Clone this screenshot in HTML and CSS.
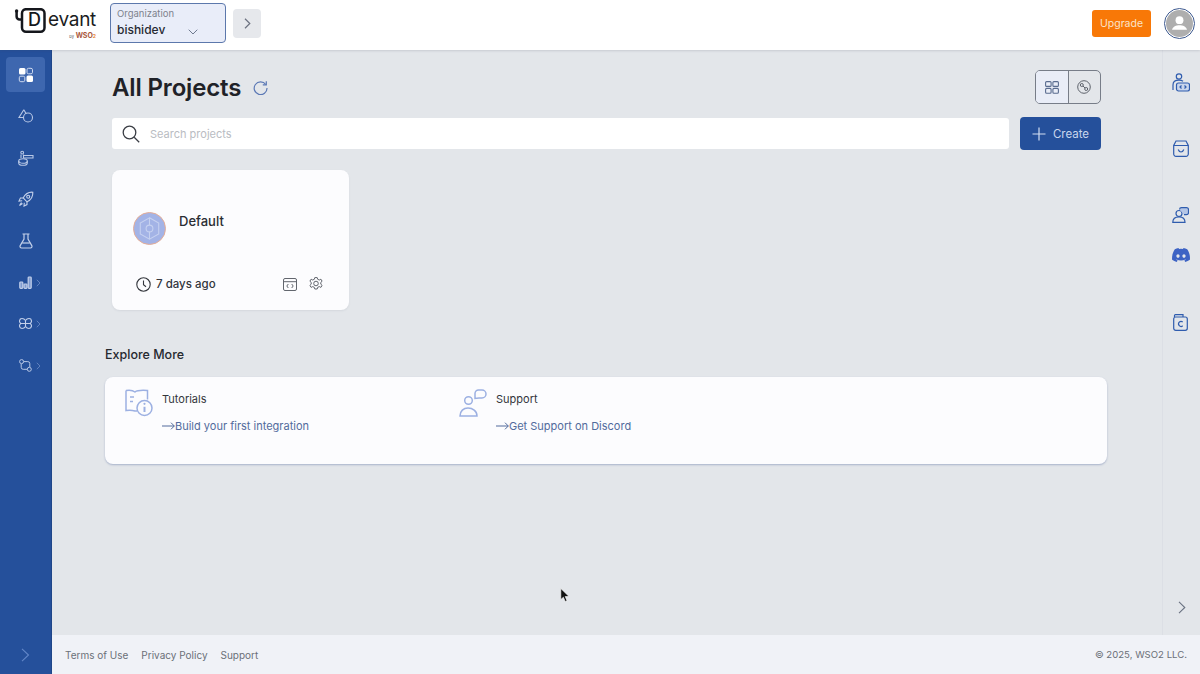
FILE: index.html
```html
<!DOCTYPE html>
<html lang="en">
<head>
<meta charset="utf-8">
<title>Devant - All Projects</title>
<link rel="stylesheet" href="styles.css">
</head>
<body>
<header class="topbar">
  <div class="logo">
    <svg class="logo-mark" width="34" height="26" viewBox="0 0 34 26" fill="none" stroke="#15171c" stroke-width="2.500"><circle cx="2.600" cy="3" r="1.700" fill="#15171c" stroke="none"/><path d="M2.600 3v5.500a3 3 0 0 0 3 3h2.400"/><rect x="8" y="1.200" width="22.500" height="22.500" rx="4"/></svg>
    <span class="logo-d">D</span>
    <div class="logo-text"><span class="logo-word">evant</span><span class="logo-by"><small>by</small> <b>WSO<i>2</i></b></span></div>
  </div>
  <div class="org">
    <span class="org-label">Organization</span>
    <span class="org-value">bishidev <svg width="10" height="6" viewBox="0 0 10 6" fill="none" stroke="#6f7a90" stroke-width="1"><path d="M.7.7 5 5l4.300-4.300"/></svg></span>
  </div>
  <button class="org-next"><svg width="7" height="11" viewBox="0 0 7 11" fill="none" stroke="#6c7280" stroke-width="1.200"><path d="M1 .8 5.800 5.500 1 10.200"/></svg></button>
  <div class="spacer"></div>
  <button class="upgrade">Upgrade</button>
  <div class="avatar"><svg width="27" height="27" viewBox="0 0 26 26"><circle cx="13" cy="13" r="13" fill="#aeaeae"/><circle cx="13" cy="9.800" r="3.800" fill="#fff"/><path d="M5.800 19c.6-3.200 4-4.400 7.200-4.400s6.600 1.200 7.200 4.400z" fill="#fff"/></svg></div>
</header>

<div class="body-row">
  <nav class="sidebar">
    <a class="nav-item active"><svg width="16" height="16" viewBox="0 0 16 16"><rect x="1" y="1" width="6.500" height="6.500" rx="1.500" fill="#fff"/><rect x="9" y="1.300" width="5.500" height="5.500" rx="1.500" fill="none" stroke="#cfdaf0"/><rect x="1.300" y="9.200" width="5.500" height="5.500" rx="1.500" fill="none" stroke="#cfdaf0"/><rect x="8.500" y="8.500" width="6.500" height="6.500" rx="1.500" fill="#fff"/></svg></a>
    <a class="nav-item"><svg width="16" height="16" viewBox="0 0 16 16" fill="none" stroke="#b9c8e6" stroke-width="1.100"><path d="M5.800 1.800 1 9.500h4"/><path d="M5.800 1.800 8.200 5.800"/><circle cx="10" cy="9.500" r="4.500"/></svg></a>
    <a class="nav-item"><svg width="16" height="16" viewBox="0 0 16 16" fill="none" stroke="#b9c8e6" stroke-width="1.100"><circle cx="4.200" cy="2.600" r="1.400"/><path d="M3 4.500v3.500M5.500 4.500v3.500M5.500 5.500h9.500v2.500H5.500"/><ellipse cx="5" cy="11" rx="4.300" ry="2.300"/><path d="M.7 11v2c0 1.300 2 2.300 4.300 2.300s4.300-1 4.300-2.300v-2"/></svg></a>
    <a class="nav-item"><svg width="16" height="16" viewBox="0 0 16 16" fill="none" stroke="#c3d0ea" stroke-width="1.100"><path d="M14.800 1.200c-4.500-.3-7.600 1.700-9.600 5.800l3.800 3.800c4.100-2 6.100-5.100 5.800-9.600z"/><circle cx="10.200" cy="5.800" r="1.500"/><path d="M5.200 7H2.400L1 10l3.200-.3M9 10.800v2.800L6 15l.3-3.200M3.500 11.500 1.500 14.500l3-2"/></svg></a>
    <a class="nav-item"><svg width="14" height="16" viewBox="0 0 14 16" fill="none" stroke="#c3d0ea" stroke-width="1.200"><path d="M3.500 1h7M5 1v5L1.200 12.600A1.600 1.600 0 0 0 2.600 15h8.800a1.600 1.600 0 0 0 1.400-2.400L9 6V1"/><path d="M3.200 10h7.600"/></svg></a>
    <a class="nav-item has-arrow"><svg width="13" height="13" viewBox="0 0 13 13" fill="#7f9bd0" stroke="#c3d0ea" stroke-width="1.200"><rect x=".8" y="6" width="3" height="6.300" rx=".8"/><rect x="5" y="8" width="3" height="4.300" rx=".8"/><rect x="9.200" y="1" width="3" height="11.300" rx=".8"/></svg><svg class="nav-arrow" width="5" height="8" viewBox="0 0 5 8" fill="none" stroke="#5f80bd"><path d="M.8.8 4 4 .8 7.200"/></svg></a>
    <a class="nav-item has-arrow"><svg width="13" height="13" viewBox="0 0 13 13" fill="none" stroke="#c3d0ea" stroke-width="1.100"><path d="M3 1.500c1.500 0 2.600.7 3.500 2 .9-1.300 2-2 3.500-2 1.600 0 2.500 1.200 2.500 2.700 0 1-.5 1.800-1.500 2.300 1 .5 1.500 1.300 1.500 2.300 0 1.500-.9 2.700-2.500 2.700-1.500 0-2.600-.7-3.500-2-.9 1.300-2 2-3.500 2C1.400 11.500.5 10.300.5 8.800c0-1 .5-1.800 1.500-2.300-1-.5-1.500-1.300-1.500-2.300 0-1.500.9-2.700 2.500-2.700z"/><path d="M2 6.500h9M6.500 3.500v6"/></svg><svg class="nav-arrow" width="5" height="8" viewBox="0 0 5 8" fill="none" stroke="#5f80bd"><path d="M.8.8 4 4 .8 7.200"/></svg></a>
    <a class="nav-item has-arrow"><svg width="13" height="13" viewBox="0 0 13 13" fill="none" stroke="#b9c8e6" stroke-width="1"><circle cx="2.600" cy="2.600" r="2"/><circle cx="10.300" cy="10.300" r="2"/><path d="M4.800 2.600h4a2 2 0 0 1 2 2v3.400M8.200 10.300h-4a2 2 0 0 1-2-2V5"/></svg><svg class="nav-arrow" width="5" height="8" viewBox="0 0 5 8" fill="none" stroke="#5f80bd"><path d="M.8.8 4 4 .8 7.200"/></svg></a>
    <div class="spacer"></div>
    <a class="nav-expand"><svg width="9" height="14" viewBox="0 0 9 14" fill="none" stroke="#6286c8" stroke-width="1.100"><path d="M1 .8 7.500 7 1 13.200"/></svg></a>
  </nav>

  <div class="page-col">
    <div class="page-row">
      <main class="content">
        <div class="title-row">
          <h1>All Projects</h1>
          <svg class="refresh" width="15" height="15" viewBox="0 0 15 15" fill="none" stroke="#5b78b5" stroke-width="1.200"><path d="M12.800 4.500A6.400 6.400 0 1 0 14 8"/><path d="M13.300 1.300v3.500H9.800"/></svg>
          <div class="spacer"></div>
          <div class="view-toggle">
            <button class="view-btn selected"><svg width="14" height="13" viewBox="0 0 14 13" fill="none" stroke="#5a6c8f" stroke-width="1.100"><rect x=".6" y=".6" width="5.500" height="4.800" rx="1"/><rect x="7.900" y=".6" width="5.500" height="4.800" rx="1"/><rect x=".6" y="7.400" width="5.500" height="4.800" rx="1"/><rect x="7.900" y="7.400" width="5.500" height="4.800" rx="1"/></svg></button>
            <button class="view-btn"><svg width="14" height="14" viewBox="0 0 14 14" fill="none" stroke="#5e636c" stroke-width="1"><circle cx="7" cy="7" r="6.300"/><circle cx="4.800" cy="5" r="1.500"/><circle cx="9.200" cy="9" r="1.500"/><path d="M6 6 8 8"/></svg></button>
          </div>
        </div>
        <div class="search-row">
          <div class="search">
            <svg width="18" height="18" viewBox="0 0 18 18" fill="none" stroke="#3a3d44" stroke-width="1.300"><circle cx="7.500" cy="7.500" r="6.300"/><path d="m12.200 12.200 5 5"/></svg>
            <span>Search projects</span>
          </div>
          <button class="create"><svg width="14" height="14" viewBox="0 0 14 14" stroke="#d3def2" stroke-width="1.200"><path d="M7 .5v13M.5 7h13"/></svg>Create</button>
        </div>
        <article class="card">
          <div class="card-top">
            <div class="project-icon"><svg width="33" height="33" viewBox="0 0 34 34"><circle cx="17" cy="17" r="16.500" fill="#a3b3e6" stroke="#e5ab94" stroke-width="1"/><g fill="none" stroke="#c6d1f0" stroke-width="1.100"><path d="m17 6 9.500 5.500v11L17 28l-9.500-5.500v-11z"/><circle cx="17" cy="17" r="3.500"/><path d="M17 13.500V6M17 20.500V28"/></g></svg></div>
            <span class="card-name">Default</span>
          </div>
          <div class="card-bottom">
            <svg width="15" height="15" viewBox="0 0 15 15" fill="none" stroke="#33363c" stroke-width="1.100"><circle cx="7.500" cy="7.500" r="6.700"/><path d="M7.500 3.500v4.300l2.500 2"/></svg>
            <span class="card-age">7 days ago</span>
            <div class="spacer"></div>
            <svg class="card-action" width="14" height="13" viewBox="0 0 14 13" fill="none" stroke="#62666e"><rect x=".5" y=".5" width="13" height="12" rx="1.500"/><path d="M.5 3.700h13M5.300 6 3.800 8l1.500 2M8.700 6l1.500 2-1.500 2"/></svg>
            <svg class="card-action gear" width="14" height="14" viewBox="0 0 14 14" fill="none" stroke="#62666e"><path d="m5.800.6 2.400 0 .5 1.700 1.600.7 1.600-.8 1.200 2-1.300 1.200v1.800l1.300 1.200-1.200 2-1.600-.8-1.600.7-.5 1.700H5.800l-.5-1.700-1.600-.7-1.600.8-1.200-2L2.200 7.200V5.400L.9 4.200l1.200-2 1.600.8 1.600-.7z"/><circle cx="7" cy="6.500" r="2.300"/></svg>
          </div>
        </article>
        <h2>Explore More</h2>
        <section class="explore">
          <div class="explore-item">
            <svg width="28" height="28" viewBox="0 0 28 28" fill="none" stroke="#9cb0e2" stroke-width="1.500"><path d="M1 1.500c3-.5 6.500-.5 9 1.500 2.500-2 6-2 12.500-1.500v9M1 1.500v20c3-.5 6-.5 9 .5h2"/><path d="M5 8h4M5 12.500h3"/><circle cx="19.500" cy="19" r="7.500"/><path d="M19.500 17.800v5.200" stroke-width="2"/><circle cx="19.500" cy="14.800" r="1.100" fill="#9cb0e2" stroke="none"/></svg>
            <div class="explore-text"><span class="explore-title">Tutorials</span><a class="explore-link"><svg width="13" height="8" viewBox="0 0 13 8" fill="none" stroke="#526b9c"><path d="M0 4h12.300M9 .7 12.300 4 9 7.300"/></svg>Build your first integration</a></div>
          </div>
          <div class="explore-item second">
            <svg width="28" height="28" viewBox="0 0 28 28" fill="none" stroke="#9cb0e2" stroke-width="1.500"><circle cx="9.500" cy="11.500" r="3.800"/><path d="M1 27c0-5 3.500-8 8-8s9 3 9 8z"/><path d="M16 9.500V4.500A3.500 3.500 0 0 1 19.500 1h3.500a3.500 3.500 0 0 1 0 8h-3z"/></svg>
            <div class="explore-text"><span class="explore-title">Support</span><a class="explore-link"><svg width="13" height="8" viewBox="0 0 13 8" fill="none" stroke="#526b9c"><path d="M0 4h12.300M9 .7 12.300 4 9 7.300"/></svg>Get Support on Discord</a></div>
          </div>
        </section>
      </main>

      <aside class="rail">
        <a class="rail-item"><svg width="18" height="19" viewBox="0 0 18 19" fill="none" stroke="#2f5cae" stroke-width="1.200"><circle cx="7" cy="3.500" r="2.700"/><path d="M1 17v-5c0-3 2.500-4.800 6-4.800 1.500 0 3 .3 4 1"/><rect x="4.500" y="10" width="13" height="8" rx="2" fill="#c9d5ec"/><path d="m9.500 12.500-1.500 1.500 1.500 1.500M12.500 12.500l1.500 1.500-1.500 1.500"/></svg></a>
        <a class="rail-item r2"><svg width="16" height="17" viewBox="0 0 16 17" fill="none" stroke="#2f5cae" stroke-width="1.200"><path d="M3 1h10l2.300 4.500V14a2.300 2.300 0 0 1-2.300 2.300H3A2.300 2.300 0 0 1 .7 14V5.500z"/><path d="M.7 5.500h14.600M5.200 9.500c.6 1.700 1.500 2.500 2.800 2.500s2.200-.8 2.800-2.500"/></svg></a>
        <a class="rail-item r3"><svg width="17" height="16" viewBox="0 0 17 16" fill="none" stroke="#2f5cae" stroke-width="1.200"><circle cx="7" cy="6.500" r="3"/><path d="M.8 15.300c0-3.500 2.700-5.500 6.200-5.500s6 2 6 5.500z"/><path d="M7.500 2.500A2 2 0 0 1 9.500.7h5a2 2 0 0 1 2 2v3a2 2 0 0 1-2 2h-2.500" fill="#b5c6e6"/></svg></a>
        <a class="rail-item r4"><svg width="18" height="14" viewBox="0 0 18 14"><path d="M15.200 1.200A14.600 14.600 0 0 0 11.500 0l-.5 1a13.500 13.500 0 0 0-4 0l-.5-1a14.600 14.600 0 0 0-3.700 1.200C.5 4.800-.2 8.300.1 11.800A14.800 14.800 0 0 0 4.700 14l1-1.500-1.600-.8.400-.3a10.500 10.500 0 0 0 9 0l.4.300-1.600.8 1 1.500a14.800 14.800 0 0 0 4.600-2.200c.4-4-.6-7.500-2.700-10.600zM6 9.800c-.9 0-1.600-.8-1.600-1.800S5.100 6.200 6 6.200 7.600 7 7.600 8 6.900 9.800 6 9.800zm6 0c-.9 0-1.600-.8-1.600-1.800s.7-1.800 1.600-1.800 1.600.8 1.600 1.800-.7 1.800-1.600 1.800z" fill="#3d63c4"/></svg></a>
        <a class="rail-item r5"><svg width="15" height="17" viewBox="0 0 15 17" fill="none" stroke="#2f5cae" stroke-width="1.200"><path d="M1.500 3V1.600c0-.5.400-.9.900-.9H10v2.300"/><rect x=".7" y="3" width="13.600" height="13.300" rx="2"/><path d="M9.700 8a2.500 2.500 0 1 0 0 3.800"/></svg></a>
        <div class="spacer"></div>
        <a class="rail-expand"><svg width="8" height="13" viewBox="0 0 8 13" fill="none" stroke="#6a7282" stroke-width="1.100"><path d="M1 .8 6.800 6.500 1 12.200"/></svg></a>
      </aside>
    </div>
    <footer class="footer">
      <a>Terms of Use</a><a>Privacy Policy</a><a>Support</a>
      <div class="spacer"></div>
      <span class="copyright">© 2025, WSO2 LLC.</span>
    </footer>
  </div>
</div>

<svg class="cursor" width="10" height="15" viewBox="0 0 10 15"><path d="M.8.5v11l2.600-2.300 1.800 4.300 1.800-.8-1.800-4.200H9z" fill="#111" stroke="#fff" stroke-width=".6"/></svg>
</body>
</html>
```

FILE: styles.css
```css
* { box-sizing: border-box; }
html, body { margin: 0; height: 100%; }
body {
  width: 1200px;
  height: 674px;
  overflow: hidden;
  display: flex;
  flex-direction: column;
  position: relative;
  font-family: "Inter", "Liberation Sans", sans-serif;
  color: #20232a;
  background: #e3e6ea;
}
button { font-family: inherit; border: 0; padding: 0; }
.spacer { flex: 1; }

.topbar {
  height: 50px;
  flex: none;
  display: flex;
  align-items: center;
  background: #fff;
  box-shadow: 0 1px 2px rgba(60, 70, 90, .16);
  padding: 0 5px 0 14px;
  position: relative;
  z-index: 2;
}
.logo { width: 96px; height: 38px; display: flex; position: relative; margin-top: -6px; }
.logo-mark { flex: none; margin-top: 5px; }
.logo-d { position: absolute; left: 14px; top: 6px; font-size: 18px; font-weight: 500; line-height: 22px; color: #15171c; }
.logo-text { display: flex; flex-direction: column; align-items: flex-end; width: 48px; }
.logo-word { font-size: 19px; line-height: 24px; margin-top: 5px; letter-spacing: -.3px; color: #1b1d22; }
.logo-by { font-size: 6px; line-height: 8px; margin-top: 0; color: #555; white-space: nowrap; }
.logo-by small { font-size: 4px; }
.logo-by b { color: #a9583c; font-size: 7px; }
.logo-by i { font-style: normal; font-size: 5px; color: #e8791f; }
.org {
  width: 116px;
  height: 40px;
  margin-top: -4px;
  border: 1px solid #5c78ac;
  border-radius: 4px;
  background: #e9edf9;
  padding: 4px 6px;
  display: flex;
  flex-direction: column;
}
.org-label { font-size: 9.500px; line-height: 12px; color: #7d828c; }
.org-value { font-size: 12px; line-height: 18px; margin-top: 1px; font-weight: 500; color: #262a33; display: flex; align-items: center; gap: 23px; }
.org-value svg { margin-top: 3px; }
.org-next {
  width: 28px; height: 29px; margin-left: 7px; margin-top: -3px; border-radius: 4px;
  background: #e6e8ec; display: flex; align-items: center; justify-content: center;
}
.upgrade {
  width: 59px; height: 27px; background: #f87807; color: #fbe3c9; border-radius: 3px;
  font-size: 10.500px; margin-top: -4px;
}
.avatar {
  width: 31px; height: 31px; margin-left: 13px; margin-top: -4px; border-radius: 50%;
  border: 1.500px solid #3e5a90; display: flex; align-items: center; justify-content: center; background: #fff;
}

.body-row { flex: 1; min-height: 0; display: flex; }
.sidebar {
  width: 52px; flex: none; background: #25509b; display: flex; flex-direction: column;
  align-items: center; padding-top: 7px; border-right: 1px solid #1f4689;
}
.nav-item {
  width: 39px; height: 35px; margin-bottom: 6.500px; display: flex; align-items: center; justify-content: center;
  border-radius: 4px; position: relative;
}
.nav-item.active { background: #3e67af; }
.nav-arrow { position: absolute; left: 30px; top: 14px; }
.nav-expand { display: flex; justify-content: center; height: 39px; align-items: flex-start; padding-top: 13px; margin-left: -1px; }

.page-col { flex: 1; min-width: 0; display: flex; flex-direction: column; }
.page-row { flex: 1; min-height: 0; display: flex; }
.content { flex: 1; min-width: 0; padding: 20px 0 0 53px; }
.title-row { display: flex; align-items: center; height: 34px; width: 996px; padding-left: 7px; }
h1 { margin: 0; padding-top: 2px; font-size: 24px; line-height: 34px; font-weight: 600; color: #1f2228; letter-spacing: -.15px; }
.refresh { margin-left: 12px; margin-top: 0; }
.view-toggle {
  display: flex; height: 34px; width: 66px; border: 1px solid #777d88; border-radius: 5px; overflow: hidden;
}
.view-btn { flex: 1; background: transparent; display: flex; align-items: center; justify-content: center; }
.view-btn.selected { background: #e9edf7; border-right: 1px solid #777d88; }
.search-row { display: flex; align-items: center; height: 33px; margin-top: 13px; width: 996px; padding-left: 7px; gap: 11px; }
.search {
  flex: 1; height: 31px; background: #fff; border-radius: 3px; display: flex; align-items: center;
  padding-left: 10px; gap: 10px; font-size: 11px; color: #b9bcc2;
}
.create {
  width: 81px; height: 33px; background: #25509b; color: #c9d6ed; border-radius: 4px; font-size: 11.500px;
  display: flex; align-items: center; justify-content: center; gap: 7px;
}
.card {
  width: 237px; height: 140px; margin: 20px 0 0 7px; background: #fcfcfe; border-radius: 8px;
  padding: 42px 27px 0 21px;
  box-shadow: 0 1px 2px rgba(90, 100, 120, .1);
}
.card-top { display: flex; align-items: flex-start; gap: 13px; height: 62px; }
.project-icon { height: 33px; }
.card-name { font-size: 13px; font-weight: 500; line-height: 20px; margin-top: -1px; color: #2a2d33; }
.card-bottom { display: flex; align-items: center; height: 20px; padding-left: 3px; }
.card-age { margin-left: 5px; font-size: 11.500px; font-weight: 500; color: #33363c; }
.gear { margin-left: 12px; margin-right: -1px; }
h2 { margin: 36px 0 0; font-size: 12.500px; line-height: 17px; font-weight: 500; color: #26292f; }
.explore {
  width: 1002px; height: 87px; margin-top: 14px; background: #fcfcfe; border-radius: 8px;
  box-shadow: 0 1px 2px rgba(95, 115, 165, .45); padding: 12px 20px 0; display: flex;
}
.explore-item { width: 334px; display: flex; gap: 9px; }
.explore-text { display: flex; flex-direction: column; }
.explore-title { font-size: 11px; line-height: 20px; color: #33363c; }
.explore-link { font-size: 11px; line-height: 16px; margin-top: 9px; color: #526b9c; white-space: nowrap; display: flex; align-items: center; }

.rail { width: 38px; flex: none; display: flex; flex-direction: column; align-items: center; padding: 22px 2px 0 0; border-left: 1px solid #dcdfe5; }
.rail-item { display: flex; justify-content: center; height: 20px; align-items: center; }
.r2 { margin-top: 46px; }
.r3 { margin-top: 47px; }
.r4 { margin-top: 20px; }
.r5 { margin-top: 47px; }
.rail-expand { display: flex; height: 34px; margin-left: 3px; }

.footer {
  height: 39px; flex: none; background: #f0f2f7; display: flex; align-items: center; gap: 13px;
  padding: 0 13px; font-size: 10px; color: #6b7078;
}
.copyright { font-size: 9.600px; }
.cursor { position: absolute; left: 560px; top: 588px; z-index: 3; }
```
